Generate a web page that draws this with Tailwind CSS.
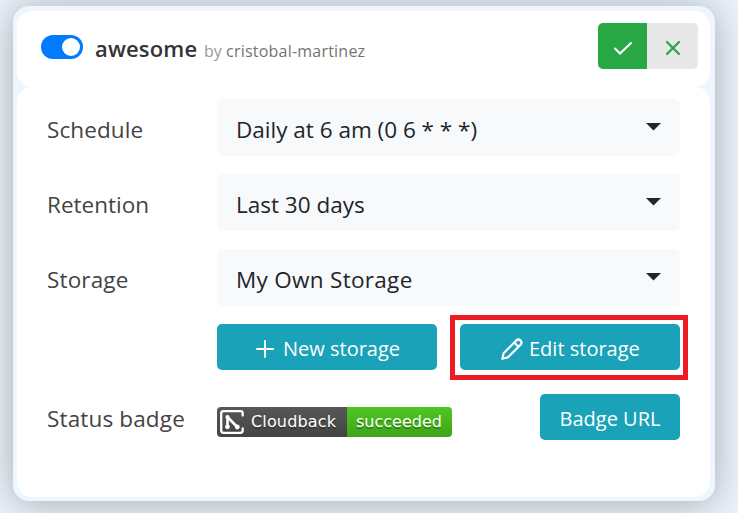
<!DOCTYPE html>
<html lang="en">
<head>
<meta charset="utf-8">
<title>Cloudback</title>
<script src="https://cdn.jsdelivr.net/npm/@tailwindcss/browser@4"></script>
</head>
<body class="w-[738px] h-[513px] overflow-hidden bg-[#ebf3fd] pl-[13px] pt-[6px] font-['Open_Sans','Noto_Sans',sans-serif] text-[#212529]">
<main class="w-[702px] h-[495px] rounded-[16px] bg-[#eef6ff] pt-[5px] pl-[4px] pr-[5px] pb-[4px] shadow-[0_2px_36px_rgba(60,50,35,0.38)]">
  <header class="h-[76px] rounded-[15px] bg-white flex items-start pl-[24px] pr-[12px] pt-[12px]">
    <div class="mt-[12px] w-[42px] h-[24px] rounded-full bg-[#007bff] flex items-center justify-end pr-[3px] shrink-0"><span class="block size-[18px] rounded-full bg-white"></span></div>
    <div class="ml-[12px] mt-[9px] flex items-baseline whitespace-nowrap leading-[32px]">
      <span class="text-[22px] font-semibold text-[#333] tracking-[0.15px] w-[102px]">awesome</span>
      <span class="ml-[7px] text-[16px] text-[#999] w-[22px]">by</span>
      <span class="text-[16px] font-medium text-[#737373] tracking-[0.22px]">cristobal-martinez</span>
    </div>
    <div class="ml-auto flex h-[46px] rounded-[5px] overflow-hidden shrink-0">
      <button class="w-[49px] bg-[#28a745] flex items-center justify-center"><svg width="20" height="16" viewBox="0 0 20 16" fill="none" stroke="#fff" stroke-width="2.1" stroke-linecap="round" class="relative top-[2px]"><path d="M2 8.5 7 13.5 18 3"/></svg></button>
      <button class="w-[51px] bg-[#e8e8e8] flex items-center justify-center"><svg width="16" height="16" viewBox="0 0 16 16" fill="none" stroke="#28a745" stroke-width="2.3" stroke-linecap="round" class="relative top-[2px]"><path d="M2 2 14 14M14 2 2 14"/></svg></button>
    </div>
  </header>
  <section class="h-[410px] rounded-[15px] bg-white pl-[30px] pr-[30px] pt-[12px] text-[22.5px]">
    <div class="flex h-[57px] mb-[18px] items-center">
      <div class="w-[170px] text-[#444] pt-[4px] tracking-[0.1px]"><span>Schedule</span></div>
      <div class="flex-1 h-full rounded-[6px] bg-[#f8f9fb] flex items-center justify-between pl-[19px] pr-[19px]"><span class="pt-[4px]">Daily at 6 am (0 6 * * *)</span><svg width="15" height="8" class="block relative -top-px"><path d="M0 0H15L7.5 7.5Z" fill="#212529"/></svg></div>
    </div>
    <div class="flex h-[57px] mb-[18px] items-center">
      <div class="w-[170px] text-[#444] pt-[4px]"><span>Retention</span></div>
      <div class="flex-1 h-full rounded-[6px] bg-[#f8f9fb] flex items-center justify-between pl-[19px] pr-[19px]"><span class="pt-[4px]">Last 30 days</span><svg width="15" height="8" class="block relative -top-px"><path d="M0 0H15L7.5 7.5Z" fill="#212529"/></svg></div>
    </div>
    <div class="flex h-[57px] mb-[18px] items-center">
      <div class="w-[170px] text-[#444] pt-[4px] tracking-[0.15px]"><span>Storage</span></div>
      <div class="flex-1 h-full rounded-[6px] bg-[#f8f9fb] flex items-center justify-between pl-[19px] pr-[19px]"><span class="pt-[4px] tracking-[0.3px]">My Own Storage</span><svg width="15" height="8" class="block relative -top-px"><path d="M0 0H15L7.5 7.5Z" fill="#212529"/></svg></div>
    </div>
    <div class="flex pl-[170px] gap-[23px] text-[20px] text-white">
      <button class="w-[220px] h-[46px] rounded-[5px] bg-[#19a2b8] flex items-center pl-[39px] whitespace-nowrap"><svg width="18" height="18" viewBox="0 0 18 18" class="mr-[9px] relative top-[2px]" stroke="#fff" stroke-width="2" stroke-linecap="round"><path d="M9 1V17M1 9H17"/></svg><span class="pt-[3px]">New storage</span></button>
      <div class="relative">
        <button class="w-[220px] h-[46px] rounded-[5px] bg-[#19a2b8] flex items-center pl-[41px] whitespace-nowrap"><svg width="22" height="22" viewBox="0 0 22 22" class="mr-[6px] relative top-[2px]" fill="none" stroke="#fff" stroke-width="2.2" stroke-linejoin="round" stroke-linecap="round"><path d="M1.3 20.7 2.6 15.2 15.3 2.4Q17.4.5 19.5 2.5 21.5 4.6 19.6 6.7L6.8 19.4ZM13.2 4.5 17.5 8.8"/></svg><span class="pt-[3px]">Edit storage</span></button>
        <div class="absolute -left-[10px] -top-[9px] w-[238px] h-[65px] border-[5px] border-[#ed1c24]"></div>
      </div>
    </div>
    <div class="flex mt-[24px] h-[46px]">
      <div class="w-[170px] text-[#444] pt-[8px] tracking-[0.15px]"><span>Status badge</span></div>
      <div class="mt-[13px] w-[235px] h-[30px] rounded-[4px] overflow-hidden flex text-white text-[16px] leading-[30px] font-['DejaVu_Sans',sans-serif] [text-shadow:0_1.5px_0_rgba(1,1,1,0.3)] whitespace-nowrap">
        <div class="w-[130px] bg-linear-to-b from-[#575757] to-[#444] flex items-center pl-[3px]"><svg width="24" height="24" viewBox="0 0 24 24" fill="none" stroke="#fff" stroke-linecap="round" stroke-linejoin="round" class="mr-[7px] shrink-0"><path stroke-width="2.3" d="M22.7 5.5V3.5Q22.7 1.2 20.4 1.2H3.5Q1.2 1.2 1.2 3.5V20.5Q1.2 22.8 3.5 22.8H20.4Q22.7 22.8 22.7 20.5V18.5"/><path stroke-width="2.6" d="M7.5 17V7L17.2 17"/><g fill="#fff" stroke="none"><circle cx="7.5" cy="7" r="2.1"/><circle cx="7.5" cy="16.8" r="2.4"/><circle cx="17.3" cy="17" r="2.4"/></g></svg><span class="tracking-[0.15px]">Cloudback</span></div>
        <div class="w-[105px] bg-linear-to-b from-[#4ec820] to-[#3ea31a] pl-[9px]"><span>succeeded</span></div>
      </div>
      <button class="ml-auto w-[140px] h-[46px] rounded-[5px] bg-[#19a2b8] text-white text-[20px] flex items-center justify-center pt-[3px] whitespace-nowrap"><span>Badge URL</span></button>
    </div>
  </section>
</main>
</body>
</html>
